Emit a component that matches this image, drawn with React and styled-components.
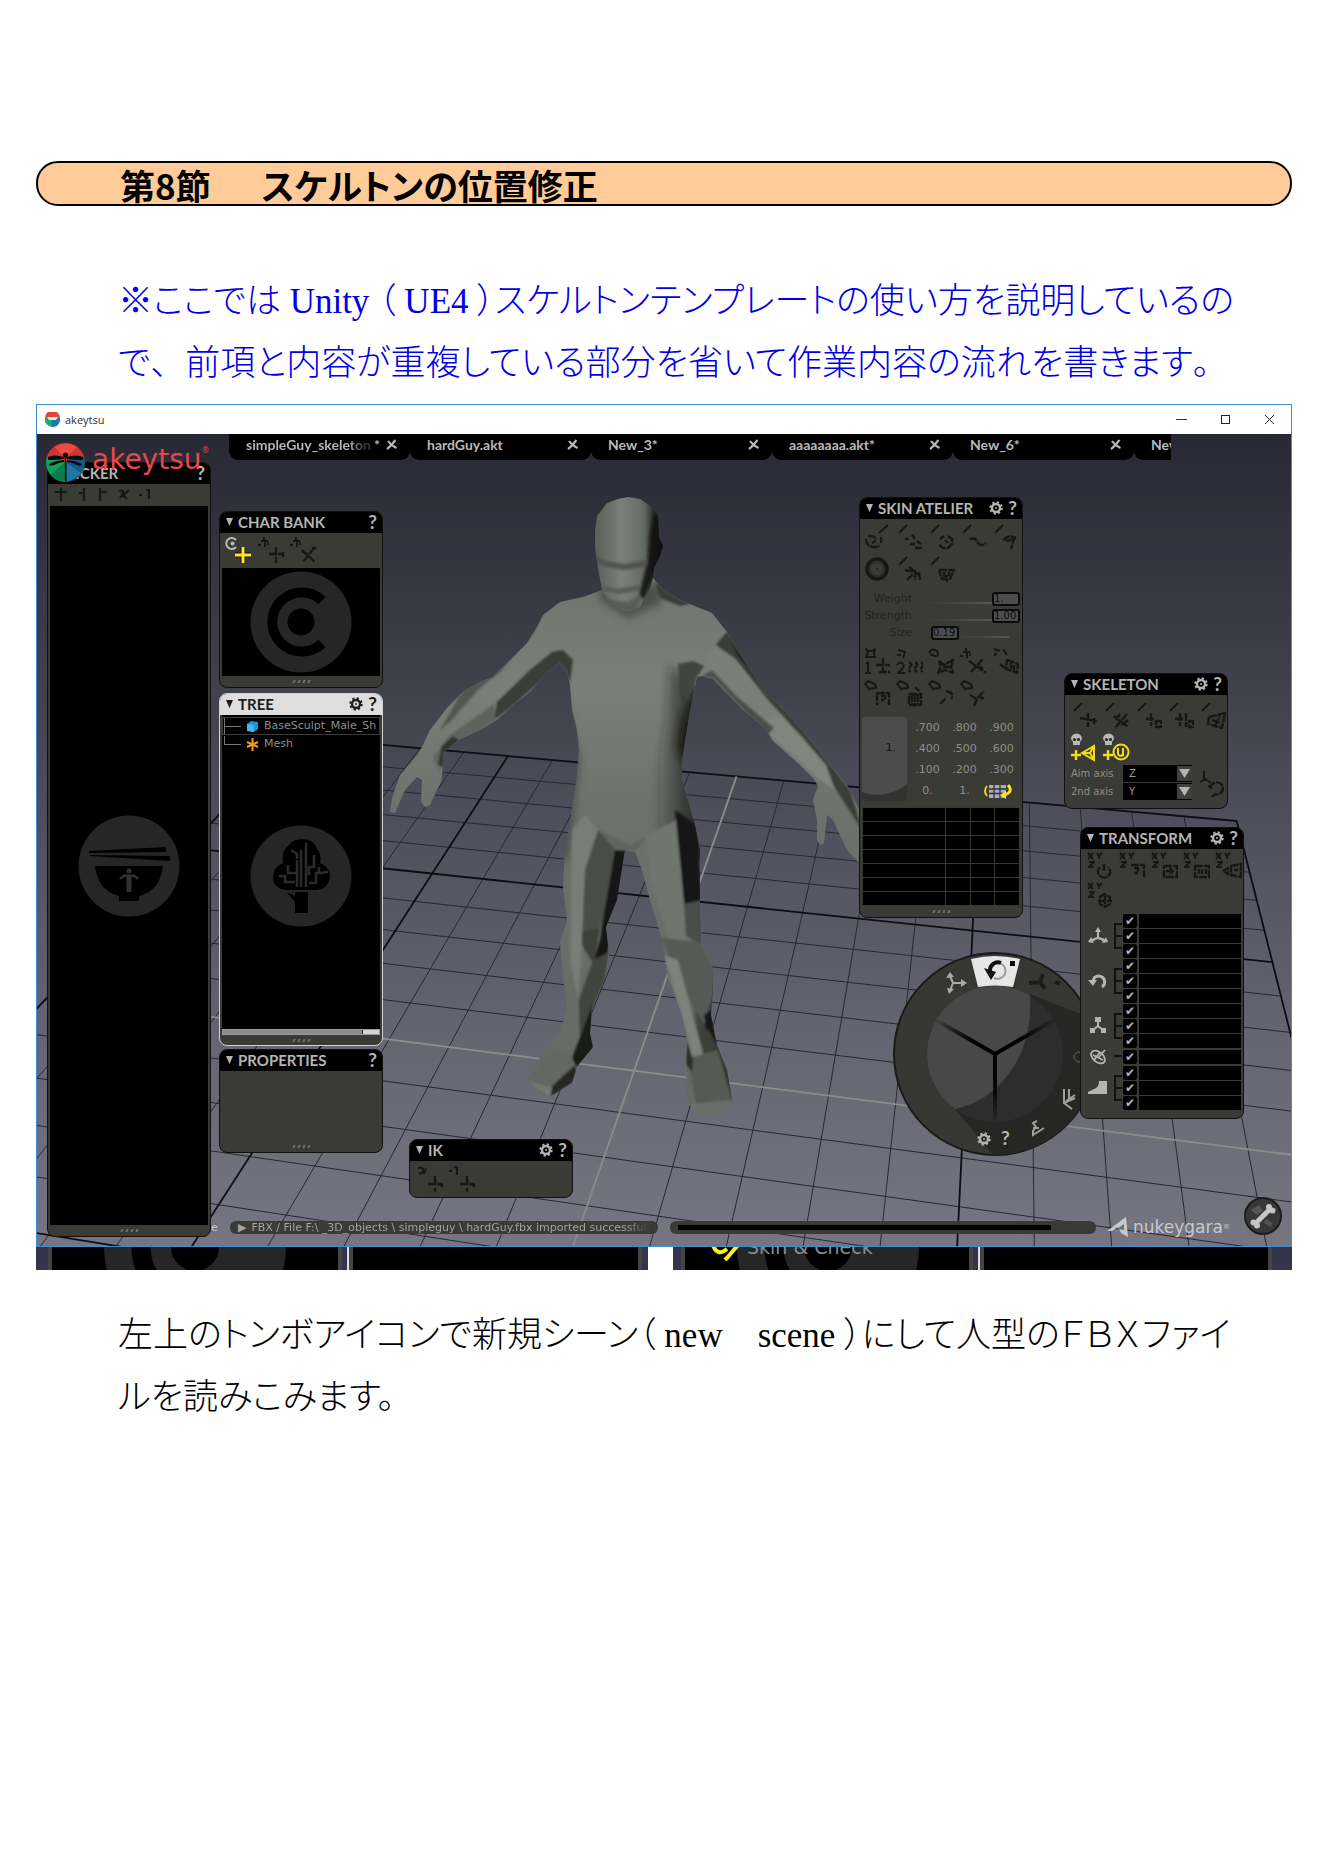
import React from "react";
import styled, { createGlobalStyle, css } from "styled-components";

const GlobalStyle = createGlobalStyle`
  *, *::before, *::after { box-sizing: border-box; }
  body { margin: 0; background: #fff; }
  button, input, select { font: inherit; color: inherit; margin: 0; padding: 0; border: 0; background: none; border-radius: 0; }
  svg { display: block; }
`;

const uiFont = `"DejaVu Sans", "Liberation Sans", sans-serif`;
const headFont = `Lato, "Open Sans", sans-serif`;

/* ---------- document ---------- */

const Page = styled.main`
  padding: 161px 36px 120px;
`;

const Banner = styled.h1`
  display: flex;
  align-items: center;
  height: 45px;
  margin: 0 0 65px;
  padding: 2px 82px 0;
  border: 2px solid #000;
  border-radius: 22px;
  background: #ffcc99;
  color: #000;
  font: bold 35px/40px "Noto Sans CJK JP", sans-serif;
  font-feature-settings: "palt";
  white-space: pre;
`;

const Paragraph = styled.p`
  margin: 0;
  padding: ${(p) => (p.$after ? "35px" : "0")} 0 0 82px;
  color: ${(p) => (p.$note ? "#0000e6" : "#000")};
  font: 300 35px/62px "Liberation Serif", "Noto Sans CJK JP", serif;
  font-feature-settings: "palt";
  white-space: pre;
`;

const FullWidth = styled.span`
  font-feature-settings: normal;
`;

/* ---------- application window ---------- */

const Window = styled.section`
  margin-top: 9px;
  border: 1px solid #3d8fd1;
  background: #fff;
`;

const TitleBar = styled.header`
  display: flex;
  align-items: center;
  gap: 5px;
  height: 29px;
  padding-left: 8px;
  color: #333;
  font: 11px/16px "Open Sans", "Noto Sans", sans-serif;
`;

const WindowButtons = styled.div`
  display: flex;
  margin-left: auto;
`;

const WindowButton = styled.button`
  display: grid;
  place-items: center;
  width: 44px;
  height: 27px;
`;

const Viewport = styled.div`
  position: relative;
  overflow: hidden;
  aspect-ratio: 1254 / 812;
  background: #4a4a59;
`;

const Scene = styled.svg`
  width: 100%;
  height: 100%;
`;

const Brand = styled.div`
  position: absolute;
  left: 9px;
  top: 9px;
  z-index: 3;
  display: flex;
  gap: 7px;
`;

const Wordmark = styled.span`
  display: flex;
  color: #e8474b;
  font: 28px/34px ${uiFont};
  sup { font-size: 8px; line-height: 16px; }
`;

const Tabs = styled.nav`
  position: absolute;
  left: 192px;
  top: 0;
  display: flex;
  width: 942px;
  height: 26px;
  overflow: hidden;
`;

const Tab = styled.div`
  display: flex;
  flex: 0 0 181px;
  align-items: center;
  justify-content: space-between;
  padding: 0 13px 5px 17px;
  background: #000;
  border-radius: 0 0 9px 9px;
  color: #b9b9b9;
  font: bold 14px/20px ${headFont};
`;

const TabName = styled.button`
  font-weight: bold;
  ${(p) => p.$fade && css`
    max-width: 136px;
    overflow: hidden;
    background: linear-gradient(90deg, #b9b9b9 82%, #333 95%);
    background-clip: text;
    -webkit-text-fill-color: transparent;
  `}
`;

const TabClose = styled.button`
  display: flex;
  align-items: center;
  gap: 6px;
`;

/* ---------- floating panels ---------- */

const Panel = styled.section`
  position: absolute;
  left: ${(p) => p.$x}px;
  top: ${(p) => p.$y}px;
  z-index: 1;
  display: flex;
  flex-direction: column;
  width: 164px;
  height: ${(p) => p.$h}px;
  overflow: hidden;
  border: 1px solid ${(p) => (p.$active ? "#d0d0d0" : "#111")};
  border-radius: 8px;
  background: #3a3a37;
  color: #8e8e8a;
  font: 11px/14px ${uiFont};
`;

const PanelHead = styled.header`
  display: flex;
  flex: none;
  align-items: center;
  gap: 5px;
  height: 21px;
  padding: 0 5px 2px 6px;
  background: ${(p) => (p.$active ? "#dedede" : "#000")};
  color: ${(p) => (p.$active ? "#1c1c1c" : "#b4b4b4")};
`;

const PanelTitle = styled.h2`
  margin: 0 auto 0 0;
  font: bold 15px/18px ${headFont};
  white-space: nowrap;
`;

const Help = styled.button`
  font: bold 19px/19px ${headFont};
`;

const Tools = styled.div`
  display: grid;
  flex: none;
  grid-template-columns: repeat(5, 32px);
  grid-auto-rows: ${(p) => p.$row || 32}px;
  padding: ${(p) => p.$pad || "2px 0 0 1px"};
`;

const Tool = styled.button`
  display: grid;
  place-items: center;
  color: #171716;
`;

const MiniTools = styled.div`
  display: flex;
  flex: none;
  gap: 7px;
  height: 22px;
  align-items: center;
  padding-left: 6px;
  color: #171716;
`;

const Well = styled.div`
  display: grid;
  flex: 1;
  place-items: center;
  min-height: 0;
  margin: 0 2px;
  background: #000;
`;

const Grip = styled.div`
  flex: none;
  display: flex;
  justify-content: center;
  align-items: center;
  gap: 3px;
  height: ${(p) => p.$h || 11}px;
  margin-top: ${(p) => (p.$push ? "auto" : "0")};
  i { width: 2px; height: 3px; background: #71716e; transform: skewX(-20deg); }
`;

const TreeBody = styled.div`
  display: flex;
  flex: 1;
  flex-direction: column;
  margin: 0 2px;
  padding-top: 2px;
  background: #000;
`;

const TreeRow = styled.button`
  display: flex;
  flex: none;
  align-items: center;
  gap: 5px;
  height: 18px;
  width: 100%;
  overflow: hidden;
  border: 1px solid ${(p) => (p.$selected ? "#3c3c3a" : "transparent")};
  white-space: nowrap;
  text-align: left;
`;

const Branch = styled.span`
  flex: none;
  width: 17px;
  height: ${(p) => (p.$last ? "18px" : "17px")};
  margin: 0 0 ${(p) => (p.$last ? "16px" : "0")} 1px;
  border-left: 1px solid #777;
  border-bottom: ${(p) => (p.$last ? "1px solid #777" : "0")};
  background: ${(p) => (p.$last ? "none" : "linear-gradient(#777, #777) 0 50% / 100% 1px no-repeat")};
`;

const TreeArt = styled.div`
  display: grid;
  flex: 1;
  justify-items: center;
  align-content: start;
  padding-top: 72px;
`;

const ScrollBar = styled.div`
  height: 6px;
  border: 1px solid #9b9b9b;
  background: linear-gradient(90deg, #8b8b8b 89%, #222 89%, #222 90%, #d5d5d5 90%);
`;

const SliderRow = styled.div`
  display: grid;
  flex: none;
  grid-template-columns: 52px 1fr;
  gap: 14px;
  align-items: center;
  height: 17px;
  padding: 0 2px 0 0;
  color: #232321;
  label { text-align: right; }
  > div { display: flex; align-items: center; margin-left: ${(p) => (p.$start ? "5px" : "0")}; }
`;

const Track = styled.span`
  flex: ${(p) => (p.$fixed ? "0 0 50px" : "1")};
  height: 2px;
  margin-top: 8px;
  background: linear-gradient(90deg, transparent, #555552);
`;

const ValueInput = styled.input`
  width: 28px;
  height: 14px;
  border: 2px solid #0c0c0c;
  border-radius: 3px;
  background: #4d4d4f;
  color: #0e0e0e;
  font: 10px/10px ${uiFont};
`;

const Presets = styled.div`
  display: grid;
  flex: none;
  grid-template-columns: 47px repeat(3, 37px);
  grid-template-rows: repeat(4, 21px);
  margin: 8px 2px 6px;
  text-align: center;
`;

const PresetPad = styled.button`
  grid-row: 1 / 5;
  margin-right: 2px;
  padding: 0 11px 22px 0;
  border-radius: 4px;
  background: radial-gradient(ellipse 56px 70px at 34% 10%, #4c4c4c 98%, #323230 100%);
  color: #161616;
  text-align: right;
`;

const WeightTable = styled.table`
  flex: 1;
  margin: 0 2px;
  border-collapse: collapse;
  background: #000;
  td { border: 1px solid #373731; padding: 0; height: 14px; }
  td:first-child { width: 83px; }
`;

const AxisBlock = styled.div`
  display: grid;
  grid-template-columns: 48px 69px 1fr;
  align-items: center;
  column-gap: 4px;
  row-gap: 1px;
  padding: 2px 0 0 6px;
  font-size: 10px;
  white-space: nowrap;
  > button { grid-column: 3; grid-row: 1 / 3; }
`;

const SelectBox = styled.div`
  display: grid;
  grid-template-columns: 1fr 15px;
  align-items: center;
  height: 17px;
  background: #000;
  select {
    grid-area: 1 / 1 / 2 / 3;
    height: 17px;
    padding-left: 6px;
    appearance: none;
    outline: 0;
    color: #9b9b98;
  }
  svg { grid-area: 1 / 2; background: #3f3f3d; pointer-events: none; }
`;

const Channels = styled.div`
  display: grid;
  gap: 1px;
  padding: 4px 2px 0 0;
`;

const ChannelGroup = styled.div`
  display: grid;
  grid-template-columns: 33px 8px 1fr;
  align-items: center;
  > svg { justify-self: center; color: #b4b4b0; }
`;

const Bracket = styled.span`
  align-self: stretch;
  margin: ${(p) => (p.$single ? "6px 0" : "9px 0")};
  border: solid #111;
  border-width: ${(p) => (p.$single ? "2px 0 0" : "2px 0 2px 2px")};
  background: ${(p) => (p.$single ? "none" : "linear-gradient(#111, #111) 0 50% / 100% 2px no-repeat")};
`;

const ChannelRows = styled.div`
  display: grid;
  gap: 1px;
`;

const ChannelRow = styled.div`
  display: grid;
  grid-template-columns: 14px 1fr;
  gap: 2px;
  height: 14px;
  margin-left: 1px;
`;

const Check = styled.input`
  display: grid;
  place-items: center;
  width: 14px;
  height: 14px;
  appearance: none;
  border-radius: 2px;
  background: #000;
  &:checked::after { content: "✔"; color: #b4b4b1; font: 12px/14px "DejaVu Sans", sans-serif; }
`;

const ChannelInput = styled.input`
  width: 100%;
  background: #000;
`;

/* ---------- viewport furniture ---------- */

const Wheel = styled.svg`
  position: absolute;
  left: 855px;
  top: 517px;
`;

const StatusBar = styled.footer`
  position: absolute;
  left: 174px;
  right: 9px;
  bottom: 5px;
  display: grid;
  grid-template-columns: 13px 428px 432px 1fr 38px;
  align-items: center;
  column-gap: 6px;
  height: 46px;
  color: #c9c9ca;
  font: 11px/13px ${uiFont};
`;

const Message = styled.output`
  display: flex;
  gap: 5px;
  align-items: center;
  height: 13px;
  margin-top: 18px;
  padding: 0 8px;
  overflow: hidden;
  border-radius: 6px;
  background: #3a3a37;
  color: #a3a3a0;
  white-space: nowrap;
  span { overflow: hidden; mask-image: linear-gradient(90deg, #000 94%, transparent); }
`;

const Progress = styled.div`
  height: 13px;
  margin: 18px 0 0 6px;
  padding: 4px 45px 4px 8px;
  border-radius: 6px;
  background: #3a3a37;
  &::before { content: ""; display: block; height: 5px; background: #000; }
`;

const Maker = styled.span`
  display: flex;
  align-items: center;
  gap: 4px;
  margin: 17px 0 0 5px;
  color: #c8c8cb;
  font: 17px/20px ${uiFont};
  sup { margin-left: -4px; font-size: 7px; line-height: 8px; }
`;

const StatusStub = styled.span`
  margin-top: 18px;
`;

const RoundButton = styled.button`
  align-self: start;
  margin-top: 2px;
`;

const Beneath = styled.div`
  display: flex;
  height: 23px;
  overflow: hidden;
`;

const BeneathHalf = styled.div`
  display: flex;
  flex: ${(p) => p.$grow};
  margin-right: ${(p) => (p.$gap ? "25px" : "0")};
  padding: 0 ${(p) => (p.$gap ? "6px" : "20px")} 0 ${(p) => (p.$gap ? "12px" : "8px")};
  background: #34354a;
`;

const Pane = styled.div`
  position: relative;
  flex: 1;
  margin-right: ${(p) => (p.$line ? "7px" : "0")};
  overflow: hidden;
  border: solid #444442;
  border-width: 0 4px;
  background: #000;
  box-shadow: ${(p) => (p.$line ? "5px 0 0 #34354a, 7px 0 0 #dcdce4" : "none")};
`;

const Ring = styled.svg`
  margin-left: 51px;
`;

const PaneLabel = styled.div`
  position: absolute;
  left: 26px;
  top: -12px;
  display: flex;
  gap: 8px;
  color: #8d8d8d;
  font: 19px/24px ${uiFont};
  white-space: nowrap;
`;

/* ---------- drawings ---------- */

/* Coefficients of the perspective that maps grid units to scene units. */
const quad = { a: 414.7, b: -263.1, c: 508, d: -3.9, e: 9.7, f: 756, g: -0.0575, h: -0.258 };
const project = (u, v) => {
  const s = (u + 5) / 10;
  const t = (10 - v) / 10;
  const w = 1 + quad.g * s + quad.h * t;
  return [
    ((quad.a * s + quad.b * t + quad.c) / w).toFixed(1),
    ((quad.d * s + quad.e * t + quad.f) / w).toFixed(1),
  ];
};
const steps = Array.from({ length: 21 }, (_, i) => i - 10);
const gridPath = (pick) =>
  steps
    .filter(pick)
    .map((n) => `M${project(n, 10)}L${project(n, -10)}M${project(-10, n)}L${project(10, n)}`)
    .join("");

const bodyPath =
  "M602 590L583 597L560 602L543 615L537 627L527 643L513 657L493 677L480 682L463 692L447 708L430 730L423 745L417 755L400 775L392 798L390 812L395 813L405 790L417 777L422 780L421 802L425 807L430 805L441 782L443 765L443 753L458 740L480 730L497 720L513 705L530 692L547 672L560 663L567 670L570 685L572 710L577 730L579 750L577 775L572 810L565 850L563 887L567 920L560 943L563 977L567 1010L560 1032L543 1053L525 1082L550 1097L572 1083L577 1067L593 1047L590 1033L592 1010L605 977L609 953L606 927L617 900L625 850L635 852L642 870L650 900L663 942L667 975L682 1015L687 1040L686 1060L687 1100L697 1116L718 1116L733 1105L727 1070L717 1045L711 1015L713 990L712 965L702 945L700 910L700 850L695 825L688 800L682 780L682 762L685 742L690 712L697 677L702 676L713 679L743 710L765 728L773 741L800 765L813 778L818 786L813 800L817 820L817 840L820 845L824 843L827 815L833 820L847 850L858 862L868 850L862 815L847 785L830 765L817 748L800 728L780 705L767 695L747 665L732 642L727 632L712 613L680 600L663 590L653 578Z";
const headPath =
  "M597 516L607 503L618 499L628 497L640 499L652 507L658 516L659 538L663 546L660 556L654 568L653 578L650 588L640 607L630 611L620 609L608 600L602 590L598 568L595 548L595 530Z";

const SceneArt = () => (
  <Scene viewBox="37 434 1254 812" preserveAspectRatio="xMidYMid slice" role="img" aria-label="Low-poly man on a perspective grid">
    <defs>
      <linearGradient id="sky" x1="0" y1="0" x2="0" y2="1">
        <stop offset="0" stopColor="#292935" />
        <stop offset="0.35" stopColor="#44444f" />
        <stop offset="0.4" stopColor="#494955" />
        <stop offset="0.75" stopColor="#666673" />
        <stop offset="1" stopColor="#767683" />
      </linearGradient>
      <linearGradient id="skin" x1="0" y1="0" x2="0" y2="1">
        <stop offset="0" stopColor="#6f746d" />
        <stop offset="0.2" stopColor="#7a7f79" />
        <stop offset="0.45" stopColor="#6c716b" />
        <stop offset="1" stopColor="#656963" />
      </linearGradient>
      <linearGradient id="side" x1="0" y1="0" x2="1" y2="0">
        <stop offset="0" stopColor="#1e201d" stopOpacity="0" />
        <stop offset="1" stopColor="#141513" />
      </linearGradient>
      <linearGradient id="headSkin" x1="0" y1="0" x2="1" y2="0">
        <stop offset="0" stopColor="#5b5f59" />
        <stop offset="0.4" stopColor="#7b807a" />
        <stop offset="0.72" stopColor="#656963" />
        <stop offset="0.86" stopColor="#2c2e2b" />
        <stop offset="1" stopColor="#151614" />
      </linearGradient>
      <clipPath id="bodyClip"><path d={bodyPath} /></clipPath>
      <clipPath id="headClip"><path d={headPath} /></clipPath>
      <filter id="soft"><feGaussianBlur stdDeviation="4" /></filter>
      <filter id="face"><feGaussianBlur stdDeviation="1.6" /></filter>
      <filter id="edge"><feGaussianBlur stdDeviation="0.9" /></filter>
    </defs>
    <rect x="37" y="434" width="1254" height="812" fill="url(#sky)" />
    <path d={gridPath((n) => n % 5 !== 0)} stroke="#272836" strokeWidth="1" fill="none" />
    <path d={gridPath((n) => n % 5 === 0 && n !== 0)} stroke="#0c0d15" strokeWidth="1.8" fill="none" />
    <path d={gridPath((n) => n === 0)} stroke="#8c8d8a" strokeWidth="1.8" fill="none" />
    <path d={bodyPath} fill="url(#skin)" />
    <g clipPath="url(#bodyClip)">
      <g filter="url(#soft)">
        <path d="M702 690L668 665L665 720L652 800L660 860L708 860Z" fill="url(#side)" />
        <path d="M694 690L680 720L676 750L694 780Z" fill="#1a1b19" />
        <path d="M560 670L570 720L580 760L568 860L552 860Z" fill="#4c504a" />
        <path d="M695 1020L712 960L735 990L740 1110L722 1090Z" fill="#353832" />
        <path d="M600 600L628 618L660 604L664 585L600 585Z" fill="#4b4f49" />
      </g>
      <g filter="url(#edge)">
        <path d="M552 652L563 650L573 660L570 682L560 664L540 682L510 708L494 720L497 702L530 670Z" fill="#3b3e38" />
        <path d="M543 612L534 632L500 672L478 690L450 722L440 730L463 690L513 652Z" fill="#535751" />
        <path d="M494 704L496 722L460 742L440 758L440 772L433 757L450 735Z" fill="#5f645d" />
        <path d="M453 736L442 746L438 764L443 768L444 754L460 741Z" fill="#31342f" />
        <path d="M678 664L693 661L704 666L697 677L688 700L680 694Z" fill="#41453f" />
        <path d="M727 632L716 645L735 658L765 693L762 680L737 645Z" fill="#252723" />
        <path d="M716 645L735 658L768 700L783 716L812 750L835 788L862 830L850 790L800 725L768 692L737 655L728 632Z" fill="#3a3e37" />
        <path d="M716 645L704 660L712 672L730 672L766 728L780 716L740 668Z" fill="#7a7f79" />
        <path d="M769 718L765 730L800 762L817 778L835 790L826 765L800 735L780 715Z" fill="#80857e" />
        <path d="M702 676L714 679L745 712L768 735L774 728L735 695L712 670Z" fill="#4c504a" />
        <path d="M572 830L585 815L598 830L582 950L578 1000L570 960Z" fill="#787d76" />
        <path d="M598 830L585 870L582 940L600 928L625 848L616 850Z" fill="#494d47" />
        <path d="M625 848L615 850L602 925L600 940L594 960L607 955L630 860Z" fill="#171816" />
        <path d="M582 932L600 928L594 965L582 945Z" fill="#3c403a" />
        <path d="M593 960L609 952L605 980L590 1015L580 1040L579 1000Z" fill="#41453f" />
        <path d="M580 1038L592 1005L594 1050L577 1067L572 1058Z" fill="#191a18" />
        <path d="M553 1050L572 1056L570 1082L548 1097L525 1082Z" fill="#646860" />
        <path d="M550 1097L552 1086L575 1065L577 1080Z" fill="#252723" />
        <path d="M526 1080L552 1088L550 1098Z" fill="#73786f" />
        <path d="M675 810L697 825L702 902L684 904L680 860Z" fill="#171816" />
        <path d="M646 835L676 820L684 905L690 940L668 938L650 880Z" fill="#70756e" />
        <path d="M684 904L702 900L702 945L686 936Z" fill="#4a4e48" />
        <path d="M662 938L700 942L713 965L713 995L704 1025L690 1000L668 955Z" fill="#565a54" />
        <path d="M664 955L678 960L703 1055L692 1058L686 1030Z" fill="#7d827a" />
        <path d="M711 1010L717 1050L706 1028L704 1015Z" fill="#141513" />
        <path d="M697 1026L709 1030L718 1050L704 1056Z" fill="#3c3f39" />
        <path d="M688 1058L718 1050L733 1105L697 1110Z" fill="#555a52" />
        <path d="M687 1040L693 1060L692 1072L686 1064Z" fill="#2c2f2a" />
        <path d="M690 1104L733 1100L733 1106L718 1117L697 1117Z" fill="#6b7069" />
        <path d="M598 830L616 850L635 851L648 836L630 845Z" fill="#60655e" />
        <path d="M655 582L668 592L690 604L680 606L660 598Z" fill="#3b3e39" />
      </g>
    </g>
    <path d={headPath} fill="url(#headSkin)" />
    <g clipPath="url(#headClip)" filter="url(#face)">
      <path d="M594 555L606 561L625 564L646 560L648 566L625 570L606 567L594 561Z" fill="#4f534d" />
      <path d="M600 585L616 589L640 585L642 590L618 594L604 591Z" fill="#565a54" />
      <path d="M602 592L612 600L628 602L642 594L636 612L612 612Z" fill="#4d514b" opacity="0.7" />
      <path d="M654 512L664 520L664 560L654 574L644 600L639 594L648 560L650 535Z" fill="#111210" opacity="0.85" />
    </g>
  </Scene>
);

const GearIcon = ({ size = 14 }) => (
  <svg width={size} height={size} viewBox="0 0 14 14" fill="none" stroke="currentColor">
    <circle cx="7" cy="7" r="5.7" strokeWidth="2" strokeDasharray="2.2 2.28" />
    <circle cx="7" cy="7" r="4" strokeWidth="2.4" />
    <circle cx="7" cy="7" r="1" fill="currentColor" stroke="none" />
  </svg>
);

const Triangle = () => (
  <svg width="7" height="8" viewBox="0 0 7 8"><path d="M0 0H7L3.5 8Z" fill="currentColor" /></svg>
);

const CloseMark = () => (
  <svg width="11" height="11" viewBox="0 0 11 11" stroke="currentColor" strokeWidth="2.2" fill="none">
    <path d="M1 10C4 8 7 4 9.5 1M2 2C4 5 7 7.5 10.5 9" />
  </svg>
);

const LogoMark = () => (
  <svg width="39" height="39" viewBox="0 0 39 39">
    <clipPath id="logoClip"><circle cx="19.5" cy="19.5" r="19.5" /></clipPath>
    <g clipPath="url(#logoClip)">
      <path d="M0 0H39V15L20 19L0 15Z" fill="#d1352f" />
      <path d="M0 14L19.500 19V39H0Z" fill="#13a05c" />
      <path d="M39 14L19.500 19V39H39Z" fill="#155a86" />
      <path d="M3 33L18 20V39Z" fill="#0d7b4c" />
      <path d="M36 31L21 20V39Z" fill="#1e79a0" />
      <path d="M9 4Q19 -3 31 4L24 11H15Z" fill="#ee4b40" />
    </g>
    <path d="M18 14Q8 11 2 14Q1 17 4 17Q12 17 18 16ZM21 14Q31 11 37 14Q38 17 35 17Q27 17 21 16ZM18 17Q8 18 3 21Q3 24 8 22Q14 19 18 19ZM21 17Q31 18 36 21Q36 24 31 22Q25 19 21 19Z" fill="#06090a" />
    <circle cx="19.5" cy="12" r="2.5" fill="#06090a" />
    <path d="M19.500 11V38" stroke="#06090a" strokeWidth="1.6" />
  </svg>
);

const MiniLogo = () => (
  <svg width="15" height="15" viewBox="0 0 15 15">
    <path d="M0 6A7.500 7.500 0 0 1 15 6Z" fill="#e2453c" />
    <path d="M0 6H7V15A7.500 7.500 0 0 1 0 6Z" fill="#17ad66" />
    <path d="M15 6H7V15A7.500 7.500 0 0 0 15 6Z" fill="#1f78ae" />
    <path d="M2 5H13L11 8H4Z" fill="#d8f0ee" />
  </svg>
);

const pen = "M12 2L4 10";
const figure = "M7 1V4M4 5H11M1 9H4M8 6V11M11 6V9";
const xyz = "M2 2L7 8M7 2L2 8M11 2L13 5L16 2M13 5V8M3 11H8L3 16H8";
const glyphs = {
  rigMove: [figure, "M19 11V18M12 18H27M19 21V27M26 16V21"],
  rigBone: [figure, "M13 14L26 26M25 12L14 26M23 12H27M13 15L16 17"],
  paintArc: ["M25 2L16 10", "M3 16Q4 27 17 23M5 13Q12 12 13 17M18 14V20M9 20L13 18"],
  paintDots: [pen, "M10 16H14M17 12L20 16M15 21H20M20 25H27M26 21L22 18"],
  paintRound: [pen, "M13 16L17 13M21 13L25 16V21L21 25H16L12 22M18 17L21 20"],
  paintWave: [pen, "M11 16Q17 14 19 20Q22 24 27 20"],
  paintHook: [pen, "M12 17Q20 10 25 16M24 13L20 26M15 18L23 16"],
  paintRig: [pen, "M10 15L20 17M20 15V25M12 25L18 19M24 17L25 25M14 12L24 20"],
  paintMask: [pen, "M12 15H27L23 24H15L12 15M17 17V21H22V17M19 26H21"],
  one: ["M3 2L6 4H9L12 2L11 6L12 10H3L5 6ZM3 17L5 15V26M2 26H8", "M20 11V24M13 18H27M16 25H27"],
  two: ["M3 3L10 5L8 11M2 8H6M2 18Q6 13 9 18Q8 22 3 26H10", "M14 15Q18 17 15 20T16 25M20 15Q24 17 21 20T22 25M26 15Q29 17 27 20T28 25"],
  net: ["M2 6Q5 0 10 4Q13 9 8 9L3 7", "M12 14L17 18L26 13L24 20L26 26L18 23L11 26L14 20L12 14M16 20H25"],
  cross: [figure, "M12 25L24 12M10 14L27 26M20 19L24 22"],
  map: ["M3 2L9 4M3 9L6 6M12 2L16 8", "M16 13L27 17L26 26L15 22ZM20 16V22M23 18V24M9 17L14 21"],
  copy: ["M2 5L5 2L12 5L13 9L6 10Z", "M14 14H26V26M14 14V26M18 17H22V21H18"],
  paste: ["M2 5L5 2L12 5L13 9L6 10Z", "M14 15H26V26H14V15M17 15V26M20 15V26M23 15V26M20 8L24 12"],
  curve: ["M2 5L5 2L12 5L13 9L6 10Z", "M13 25L19 19M19 12Q28 14 24 20"],
  branch: ["M2 5L5 2L12 5L13 9L6 10Z", "M11 16L18 20L25 12M18 20L15 27M21 19H25"],
  skelMove: [pen, "M18 12V26M10 17L27 20M24 17V23"],
  skelMesh: [pen, "M12 15L26 26M25 13L13 27M18 13L14 19M26 19L19 25"],
  skelLock: [pen, "M17 12V25M12 18H20M22 20H27V26H22Z"],
  skelPair: [pen, "M14 12V25M9 18H18M20 12V26M23 20H27V26H23Z"],
  skelBox: [pen, "M11 16L27 12L24 27L10 23ZM14 19L23 22M17 24L22 15"],
  orbit: ["M6 2V12M2 13L7 10L13 14", "M13 20A6 6 0 1 1 17 25M13 20L11 16M17 25L14 28"],
  zero: [xyz, "M14 16A6 6 0 1 0 22 16M18 13V20"],
  xCopy: [xyz, "M13 14H26V26M16 17H20V22H16"],
  xPaste: [xyz, "M14 15H27V26H14ZM16 20H23L20 17M23 20L20 23"],
  xSave: [xyz, "M13 15H27V26H13ZM17 18V23M20 18V23M24 18V23"],
  xMirror: [xyz, "M17 15L27 13V26L17 24ZM9 20L14 17V23ZM20 19H24"],
  xLoop: [xyz, "M14 16L18 13L24 16V23L19 26L14 23ZM12 20H26M19 15V25"],
  ikBone: ["M2 3Q8 1 7 7L3 9M10 3L8 9", "M19 11V18M12 19H26V22M19 23V27"],
  ikJoint: ["M1 6H4M6 2H9V10", "M19 11V18M12 19H26V22M19 23V27"],
};

const ToolIcon = ({ name }) => (
  <svg width="28" height="28" viewBox="0 0 28 28" fill="none" stroke="currentColor" strokeLinejoin="round">
    <path d={glyphs[name][0]} strokeWidth="2" />
    <path d={glyphs[name][1]} strokeWidth="2.4" strokeDasharray="8 1" />
  </svg>
);

const AddCharIcon = () => (
  <svg width="28" height="28" viewBox="0 0 28 28" fill="none">
    <path d="M11 4A5.500 5.500 0 1 0 11 11" stroke="#b9b9b9" strokeWidth="2" />
    <circle cx="7.500" cy="7.500" r="2" fill="#b9b9b9" />
    <path d="M18 11V27M10 19H26" stroke="#111" strokeWidth="5" />
    <path d="M18 11V27M10 19H26" stroke="#ffe81a" strokeWidth="3" />
  </svg>
);

const SkullIcon = ({ children }) => (
  <svg width="28" height="30" viewBox="0 0 28 30" fill="none">
    <path d="M1 7A5.500 5.500 0 0 1 12 7L10 10V13H3V10Z" fill="#b8b8b6" />
    <circle cx="4.500" cy="7.500" r="1.500" fill="#222" />
    <circle cx="8.500" cy="7.500" r="1.500" fill="#222" />
    <path d="M6 18V28M1 23H11" stroke="#f2dc14" strokeWidth="2.400" />
    <g stroke="#f2dc14" strokeWidth="2">{children}</g>
  </svg>
);

const TargetIcon = () => (
  <svg width="26" height="26" viewBox="0 0 26 26" fill="none" stroke="currentColor">
    <circle cx="13" cy="13" r="10" strokeWidth="3.5" />
    <circle cx="13" cy="13" r="7" strokeWidth="1.500" stroke="#2b2b29" />
    <circle cx="13" cy="13" r="0.500" />
  </svg>
);

const PadIcon = () => (
  <svg width="30" height="18" viewBox="0 0 30 18" fill="none">
    <path d="M6 3H23V16H6Z" fill="#a9adba" />
    <path d="M6 7H23M6 11.500H23M11 3V16M17 3V16" stroke="#333" strokeWidth="1.300" />
    <path d="M4 4Q0 9 4 14" stroke="#e8cf10" strokeWidth="2" />
    <path d="M25 3Q31 10 21 13" stroke="#ffe01a" strokeWidth="3" />
    <path d="M17 13L23 9V17Z" fill="#ffe01a" />
  </svg>
);

const CharMark = () => (
  <svg width="102" height="102" viewBox="0 0 102 102" fill="none">
    <circle cx="51" cy="51" r="50.500" fill="#262626" />
    <circle cx="51" cy="51" r="13.500" fill="#000" />
    <path d="M72 29.500A29.500 29.500 0 1 0 72 72.500" stroke="#000" strokeWidth="10" />
  </svg>
);

const BowlMark = () => (
  <svg width="102" height="102" viewBox="0 0 102 102">
    <circle cx="51" cy="51" r="50.500" fill="#262626" />
    <path d="M11 36L88 32V37L11 38ZM12 40L92 41V46L12 41Z" />
    <path d="M17 51H85Q82 76 61 81V86H41V81Q20 76 17 51Z" />
    <circle cx="51" cy="56" r="2.500" fill="#303030" />
    <path d="M42 64Q46 59 51 61Q56 59 60 64M51 61V77" stroke="#303030" strokeWidth="2.500" fill="none" />
    <path d="M51 61V77" stroke="#303030" strokeWidth="5" />
  </svg>
);

const TreeMark = () => (
  <svg width="102" height="102" viewBox="0 0 102 102">
    <circle cx="51" cy="51" r="50.500" fill="#262626" />
    <path d="M46 65H34Q23 62 23 52Q23 42 33 38Q31 25 39 20Q43 14 52 14Q64 14 67 24Q72 29 70 38Q81 43 80 53Q78 64 67 65H57Z" />
    <path d="M45 67H58V88H45V77L37 67L45 71Z" />
    <path d="M56 18V62M51 25V62M47 35V62M46 48H38V40M64 30V42H59V50M74 48H66V58H59M29 51H35V57H45M41 25L47 29V34M78 47L70 48M69 42V49" stroke="#2b2b2b" strokeWidth="2.500" fill="none" />
  </svg>
);

const HalfRing = () => (
  <Ring width="184" height="23" viewBox="0 0 184 23" fill="none">
    <circle cx="92" cy="0" r="91" fill="#262626" />
    <path d="M92 -54A54 54 0 0 0 92 54" stroke="#000" strokeWidth="19" />
    <circle cx="92" cy="0" r="24" fill="#000" />
  </Ring>
);

const channelIcons = [
  <svg key="m" width="20" height="18" viewBox="0 0 20 18" fill="currentColor"><path d="M10 0L13 5H11V10L17 12L18 10L20 15L14 16L15 14L10 12L5 14L6 16L0 15L3 10L4 12L9 10V5H7Z" /></svg>,
  <svg key="r" width="20" height="18" viewBox="0 0 20 18"><path d="M14 15A6 6 0 1 0 5 8" fill="none" stroke="currentColor" strokeWidth="3" /><path d="M0 8H9L5 14Z" fill="currentColor" /></svg>,
  <svg key="s" width="18" height="18" viewBox="0 0 18 18" fill="none" stroke="currentColor" strokeWidth="2"><path d="M9 3V9L4 13M9 9L14 13" /><path d="M7 1H11V4H7ZM2 12H5V15H2ZM13 12H16V15H13Z" fill="currentColor" /></svg>,
  <svg key="o" width="18" height="16" viewBox="0 0 18 16" fill="none" stroke="currentColor" strokeWidth="1.800"><ellipse cx="9" cy="8" rx="8" ry="5" transform="rotate(40 9 8)" /><path d="M4 6L14 11M16 1L9 9M5 11L11 3" /></svg>,
  <svg key="f" width="20" height="14" viewBox="0 0 20 14" fill="currentColor"><path d="M11 0H19V13H0V11L8 7Q11 5 11 0Z" /></svg>,
];

const PickerIcon = ({ d }) => (
  <svg width="14" height="16" viewBox="0 0 14 16" fill="none" stroke="currentColor" strokeWidth="2.2"><path d={d} /></svg>
);

/* ---------- composed parts ---------- */

const PanelTop = ({ title, gear, active }) => (
  <PanelHead $active={active}>
    <Triangle />
    <PanelTitle>{title}</PanelTitle>
    {gear && <button aria-label={`${title} settings`}><GearIcon /></button>}
    <Help aria-label={`${title} help`}>?</Help>
  </PanelHead>
);

const ToolSet = ({ names }) =>
  names.map((n) => (
    <Tool key={n} aria-label={n}>
      <ToolIcon name={n} />
    </Tool>
  ));

const GripDots = (props) => (
  <Grip {...props}><i /><i /><i /><i /></Grip>
);

const AxisSelect = ({ id, label, value }) => (
  <>
    <label htmlFor={id}>{label}</label>
    <SelectBox>
      <select id={id} defaultValue={value}>
        <option>X</option><option>Y</option><option>Z</option>
      </select>
      <svg width="15" height="15" viewBox="0 0 15 15"><path d="M2 3H13L7.500 12Z" fill="#b5b5b5" /></svg>
    </SelectBox>
  </>
);

const tabs = ["hardGuy.akt", "New_3*", "aaaaaaaa.akt*", "New_6*", "New_7*"];
const presets = [".700", ".800", ".900", ".400", ".500", ".600", ".100", ".200", ".300", "0.", "1."];
const channels = [["Translate", 3], ["Rotate", 3], ["Scale", 3], ["Orient", 1], ["Foot", 3]];

const MoveWheel = () => (
  <Wheel width="206" height="206" viewBox="-103 -103 206 206" role="img" aria-label="Manipulator wheel">
    <defs>
      <radialGradient id="spoke" gradientUnits="userSpaceOnUse" cx="0" cy="0" r="68">
        <stop offset="0.4" stopColor="#000" />
        <stop offset="1" stopColor="#000" stopOpacity="0.1" />
      </radialGradient>
      <clipPath id="disc"><circle r="68" /></clipPath>
      <clipPath id="wheelClip"><circle r="101" /></clipPath>
    </defs>
    <circle r="101" fill="#373734" stroke="#1a1a19" strokeWidth="2" />
    <path d="M35 -60L101 -34V103H0L-40 55Z" fill="#262624" clipPath="url(#wheelClip)" />
    <circle r="68" fill="#2d2d2d" />
    <path d="M35 -60Q38 -10 12 22Q-8 48 -40 55L-90 60V-90H35Z" fill="#484848" clipPath="url(#disc)" />
    <path d="M0 0V68M0 0L-59 -34M0 0L59 -34" stroke="url(#spoke)" strokeWidth="4" />
    <path d="M-24 -95Q0 -101 25 -95L18 -67Q0 -70 -17 -67Z" fill="#e6e6e6" />
    <path d="M-1 -76A8 8 0 1 0 -5 -86" fill="none" stroke="#999" strokeWidth="2" />
    <path d="M6 -91A8 8 0 0 0 -5 -83" fill="none" stroke="#111" strokeWidth="4" />
    <path d="M-11 -86L1 -82L-4 -74Z" fill="#111" />
    <rect x="15" y="-93" width="5" height="5" />
    <path d="M-45 -78L-42 -71L-32 -71M-42 -71L-45 -63" stroke="#aaa" strokeWidth="2" fill="none" />
    <path d="M-49 -76L-45 -82L-41 -77ZM-34 -75L-28 -71L-34 -67ZM-48 -66L-41 -65L-46 -60Z" fill="#aaa" />
    <path d="M34 -71L45 -72L48 -80M45 -72L50 -65M60 -72L65 -70" stroke="#1c1c1b" strokeWidth="4" fill="none" />
    <path d="M69 35V49L77 55M69 49L80 44M74 35V45M71 47L80 41" stroke="#a0a09d" strokeWidth="2" fill="none" />
    <path d="M42 67L38 69L41 73L38 77V81L49 74M38 74H44" stroke="#a0a09d" strokeWidth="2" fill="none" />
    <circle cx="84" cy="3" r="5" stroke="#666" fill="none" />
    <g transform="translate(-18 78)" color="#b4b4b0"><GearIcon /></g>
    <text x="6" y="91" fill="#b4b4b0" fontFamily="Lato, sans-serif" fontWeight="bold" fontSize="19">?</text>
  </Wheel>
);

export default function App() {
  return (
    <Page>
      <GlobalStyle />
      <Banner>第8節　  スケルトンの位置修正</Banner>
      <Paragraph $note>
        {"※ここでは Unity （ UE4 ）スケルトンテンプレートの使い方を説明しているの\nで"}
        <FullWidth>、</FullWidth>
        前項と内容が重複している部分を省いて作業内容の流れを書きます
        <FullWidth>。</FullWidth>
      </Paragraph>

      <Window aria-label="akeytsu">
        <TitleBar>
          <MiniLogo />
          akeytsu
          <WindowButtons>
            <WindowButton aria-label="Minimize"><svg width="11" height="11"><path d="M0 5.500H11" stroke="#333" /></svg></WindowButton>
            <WindowButton aria-label="Maximize"><svg width="11" height="11"><rect x="1.500" y="1.500" width="8" height="8" fill="none" stroke="#222" /></svg></WindowButton>
            <WindowButton aria-label="Close"><svg width="11" height="11"><path d="M1 1L10 10M10 1L1 10" stroke="#222" /></svg></WindowButton>
          </WindowButtons>
        </TitleBar>

        <Viewport>
          <SceneArt />

          <Brand>
            <LogoMark />
            <Wordmark>akeytsu<sup>®</sup></Wordmark>
          </Brand>

          <Tabs aria-label="Open scenes">
            <Tab>
              <TabName $fade>simpleGuy_skeleton</TabName>
              <TabClose aria-label="Close tab">*<CloseMark /></TabClose>
            </Tab>
            {tabs.map((name) => (
              <Tab key={name}>
                <TabName>{name}</TabName>
                <TabClose aria-label="Close tab"><CloseMark /></TabClose>
              </Tab>
            ))}
          </Tabs>

          <Panel $x={10} $y={28} $h={775}>
            <PanelTop title="PICKER" />
            <MiniTools>
              <PickerIcon d="M7 1V14M1 5H13" />
              <PickerIcon d="M9 1V14M4 6H9" />
              <PickerIcon d="M4 1V14M4 5H11" />
              <PickerIcon d="M2 4Q8 2 5 8L3 11M12 3L6 8L10 12" />
              <PickerIcon d="M1 8H4M8 3H11V12" />
            </MiniTools>
            <Well><BowlMark /></Well>
            <GripDots />
          </Panel>

          <Panel $x={182} $y={77} $h={177}>
            <PanelTop title="CHAR BANK" />
            <Tools $pad="1px 0 2px 3px">
              <Tool aria-label="Add character"><AddCharIcon /></Tool>
              <ToolSet names={["rigMove", "rigBone"]} />
            </Tools>
            <Well><CharMark /></Well>
            <GripDots />
          </Panel>

          <Panel $x={182} $y={259} $h={353} $active>
            <PanelTop title="TREE" gear active />
            <TreeBody>
              <TreeRow $selected>
                <Branch />
                <svg width="13" height="13" viewBox="0 0 13 13"><path d="M1 4L5 1L12 2V9L8 12L1 11Z" fill="#1794dc" /><path d="M1 4L8 5V12L1 11Z" fill="#46b4f0" /></svg>
                BaseSculpt_Male_Sh
              </TreeRow>
              <TreeRow>
                <Branch $last />
                <svg width="13" height="13" viewBox="0 0 13 13" stroke="#f39a1e" strokeWidth="2"><path d="M6.500 0V13M1 4L12 9M12 4L1 9" /></svg>
                Mesh
              </TreeRow>
              <TreeArt><TreeMark /></TreeArt>
              <ScrollBar />
            </TreeBody>
            <GripDots $h={10} />
          </Panel>

          <Panel $x={182} $y={615} $h={104}>
            <PanelTop title="PROPERTIES" />
            <GripDots $push />
          </Panel>

          <Panel $x={372} $y={705} $h={59}>
            <PanelTop title="IK" gear />
            <Tools $pad="2px 0 0 4px"><ToolSet names={["ikBone", "ikJoint"]} /></Tools>
          </Panel>

          <Panel $x={822} $y={63} $h={421}>
            <PanelTop title="SKIN ATELIER" gear />
            <Tools $pad="2px 0 5px 1px">
              <ToolSet names={["paintArc", "paintDots", "paintRound", "paintWave", "paintHook"]} />
              <Tool aria-label="Brush"><TargetIcon /></Tool>
              <ToolSet names={["paintRig", "paintMask"]} />
            </Tools>
            <SliderRow>
              <label htmlFor="weight">Weight</label>
              <div><Track /><ValueInput id="weight" defaultValue="1." /></div>
            </SliderRow>
            <SliderRow>
              <label htmlFor="strength">Strength</label>
              <div><Track /><ValueInput id="strength" defaultValue="1.00" /></div>
            </SliderRow>
            <SliderRow $start>
              <label htmlFor="size">Size</label>
              <div><ValueInput id="size" defaultValue="0.19" /><Track $fixed /></div>
            </SliderRow>
            <Tools $pad="4px 0 0 1px">
              <ToolSet names={["one", "two", "net", "cross", "map", "copy", "paste", "curve", "branch"]} />
            </Tools>
            <Presets>
              <PresetPad>1.</PresetPad>
              {presets.map((v, i) => <button key={i}>{v}</button>)}
              <button aria-label="Keypad"><PadIcon /></button>
            </Presets>
            <WeightTable>
              <tbody>
                {Array.from({ length: 7 }, (_, r) => (
                  <tr key={r}><td /><td /><td /><td /></tr>
                ))}
              </tbody>
            </WeightTable>
            <GripDots />
          </Panel>

          <Panel $x={1027} $y={239} $h={136}>
            <PanelTop title="SKELETON" gear />
            <Tools $pad="4px 0 0 3px">
              <ToolSet names={["skelMove", "skelMesh", "skelLock", "skelPair", "skelBox"]} />
              <Tool aria-label="Add Unity skeleton">
                <SkullIcon><path d="M12 21L24 14V28ZM24 14L20 21L24 28M12 21H20" /></SkullIcon>
              </Tool>
              <Tool aria-label="Add Unreal skeleton">
                <SkullIcon><circle cx="19" cy="20" r="7.500" /><path d="M16 16V22Q17 25 21 23M21 16V24" /></SkullIcon>
              </Tool>
            </Tools>
            <AxisBlock>
              <AxisSelect id="aim" label="Aim axis" value="Z" />
              <AxisSelect id="second" label="2nd axis" value="Y" />
              <Tool aria-label="Orient"><ToolIcon name="orbit" /></Tool>
            </AxisBlock>
          </Panel>

          <MoveWheel />

          <Panel $x={1043} $y={393} $h={292}>
            <PanelTop title="TRANSFORM" gear />
            <Tools $pad="1px 0 0 3px" $row={30}>
              <ToolSet names={["zero", "xCopy", "xPaste", "xSave", "xMirror", "xLoop"]} />
            </Tools>
            <Channels>
              {channels.map(([name, count], g) => (
                <ChannelGroup key={name}>
                  {channelIcons[g]}
                  <Bracket $single={count === 1} />
                  <ChannelRows>
                    {Array.from({ length: count }, (_, r) => (
                      <ChannelRow key={r}>
                        <Check type="checkbox" defaultChecked aria-label={`${name} ${r + 1} on`} />
                        <ChannelInput aria-label={`${name} ${r + 1}`} />
                      </ChannelRow>
                    ))}
                  </ChannelRows>
                </ChannelGroup>
              ))}
            </Channels>
          </Panel>

          <StatusBar>
            <StatusStub>e</StatusStub>
            <Message>▶<span>FBX / File F:\ _3D_objects \ simpleguy \ hardGuy.fbx imported successfully</span></Message>
            <Progress />
            <Maker>
              <svg width="22" height="22" viewBox="0 0 22 22"><path d="M0 15L19 1L21 21L14 17L11 11L5 15Z" fill="currentColor" /><path d="M10 13L17 8V14Z" fill="#6c6c7a" /></svg>
              nukeygara<sup>®</sup>
            </Maker>
            <RoundButton aria-label="Bones">
              <svg width="38" height="38" viewBox="0 0 38 38">
                <circle cx="19" cy="19" r="18" fill="#373735" stroke="#1b1b1a" strokeWidth="2" />
                <path d="M7 13L15 8L19 14L13 18ZM22 22L28 26L27 30L20 26Z" fill="#555553" />
                <path d="M11 27L27 11" stroke="#c6c6c4" strokeWidth="5" />
                <g fill="#c6c6c4"><circle cx="9.500" cy="25.500" r="3" /><circle cx="13" cy="28.500" r="3" /><circle cx="25" cy="10" r="3" /><circle cx="28.500" cy="13.500" r="3" /></g>
              </svg>
            </RoundButton>
          </StatusBar>
        </Viewport>
      </Window>

      <Beneath>
        <BeneathHalf $grow="0 0 612px" $gap>
          <Pane $line><HalfRing /></Pane>
          <Pane />
        </BeneathHalf>
        <BeneathHalf $grow="1">
          <Pane $line>
            <HalfRing />
            <PaneLabel>
              <svg width="28" height="26" viewBox="0 0 28 26" fill="none" stroke="#ffee1a" strokeWidth="4"><path d="M2 10Q6 22 16 14M27 10L16 23L14 25" /></svg>
              Skin &amp; Check
            </PaneLabel>
          </Pane>
          <Pane />
        </BeneathHalf>
      </Beneath>

      <Paragraph $after>
        {"左上のトンボアイコンで新規シーン（ new　scene ）にして人型のＦＢＸファイ\nルを読みこみます。"}
      </Paragraph>
    </Page>
  );
}
